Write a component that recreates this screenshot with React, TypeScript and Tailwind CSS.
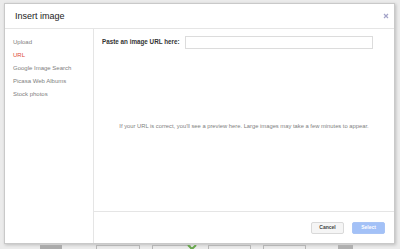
const sideItems = [
  { label: "Upload", active: false },
  { label: "URL", active: true },
  { label: "Google Image Search", active: false },
  { label: "Picasa Web Albums", active: false },
  { label: "Stock photos", active: false },
];

export default function App() {
  return (
    <div
      className="w-[400px] h-[249px] overflow-hidden bg-[#ebebeb] flex flex-col pt-[3px]"
      style={{ fontFamily: '"Liberation Sans", Arial, sans-serif' }}
    >
      {/* Dialog */}
      <div className="mx-[4px] w-[391px] h-[241px] shrink-0 bg-white border border-[#c9c9c9] shadow-[1px_1px_3px_rgba(0,0,0,0.2)] flex flex-col">
        {/* Header */}
        <div className="h-[25px] shrink-0 border-b border-[#e5e5e5] flex items-center justify-between pl-[10px] pr-[5px]">
          <span className="text-[9px] text-[#222] leading-none">Insert image</span>
          <svg width="6" height="6" viewBox="0 0 6 6" className="text-[#a3a3c8]">
            <path d="M1 1l4 4M5 1L1 5" stroke="currentColor" strokeWidth="1.2" />
          </svg>
        </div>

        <div className="flex flex-1 min-h-0">
          {/* Sidebar */}
          <div className="w-[89px] shrink-0 border-r border-[#e5e5e5] pt-[6px] pl-[8px] flex flex-col">
            {sideItems.map((it) => (
              <div
                key={it.label}
                className={`h-[13px] flex items-center text-[6px] leading-none ${
                  it.active ? "text-[#dd4b39]" : "text-[#808080]"
                }`}
              >
                {it.label}
              </div>
            ))}
          </div>

          {/* Content */}
          <div className="flex-1 flex flex-col">
            <div className="flex items-center pl-[8px] pt-[7px]">
              <span className="text-[6.3px] font-bold text-[#333] leading-none w-[83px]">
                Paste an image URL here:
              </span>
              <div className="w-[188px] h-[13px] border border-[#dcdcdc]" />
            </div>
            <div className="flex-1 flex items-center justify-center pb-[6px]">
              <span className="text-[5.8px] text-[#808080] leading-none">
                If your URL is correct, you'll see a preview here. Large images may take a few minutes to appear.
              </span>
            </div>
            {/* Footer */}
            <div className="h-[32px] shrink-0 border-t border-[#e5e5e5] flex items-center justify-end gap-[8px] pr-[9px]">
              <div className="w-[33px] h-[12px] rounded-[2px] border border-[#d9d9d9] bg-[#f5f5f5] flex items-center justify-center text-[5px] font-bold text-[#444]">
                Cancel
              </div>
              <div className="w-[33px] h-[12px] rounded-[2px] border border-[#a9c4f5] bg-[#a3c1f7] flex items-center justify-center text-[5px] font-bold text-white">
                Select
              </div>
            </div>
          </div>
        </div>
      </div>

      {/* Page behind the dialog */}
      <div className="flex items-start h-[5px] mt-[1px]">
        <div className="ml-[40px] w-[22px] h-[5px] bg-[#ababab]" />
        <div className="ml-[34px] w-[44px] h-[4px] border-t border-x border-[#b5b5b5]" />
        <div className="ml-[12px] w-[39px] h-[4px] border-t border-x border-[#b5b5b5]" />
        <div className="-ml-[4px] w-[10px] h-[5px] flex justify-center">
          <svg width="10" height="5" viewBox="0 0 10 5">
            <path d="M1 0l4 4 4-4" stroke="#6aa84f" strokeWidth="2" fill="none" />
          </svg>
        </div>
        <div className="ml-[11px] w-[43px] h-[4px] border-t border-x border-[#b5b5b5]" />
        <div className="ml-[12px] w-[43px] h-[4px] border-t border-x border-[#b5b5b5]" />
        <div className="ml-[32px] w-[15px] h-[5px] bg-[#b0b0b0]" />
      </div>
    </div>
  );
}
